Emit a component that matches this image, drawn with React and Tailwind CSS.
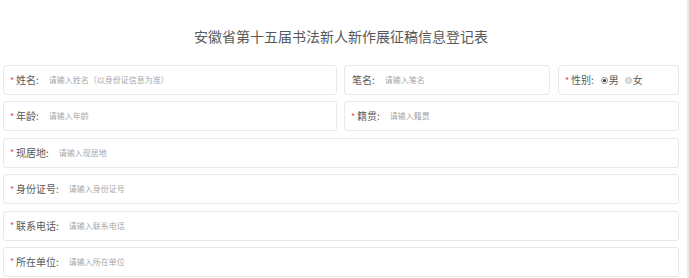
import { useState } from "react";

const FONT = { fontFamily: '"Noto Sans CJK SC", "Noto Sans", sans-serif' };

function Field({ label, placeholder, required = true, className = "" }) {
   return (
      <div
         className={`flex h-[30px] items-center rounded-[3px] border border-[#e8e8e8] bg-white pl-[6px] pr-2 ${className}`}>
         {required ? (
            <span className="w-[6px] shrink-0 text-[9px] leading-none text-[#f04848]">*</span>
         ) : (
            <span className="w-[1px] shrink-0" />
         )}
         <span className="shrink-0 text-[10px] leading-none text-[#595959]">{label}:</span>
         <input
            placeholder={placeholder}
            className="ml-[10px] min-w-0 flex-1 bg-transparent text-[8px] text-[#555] outline-none placeholder:text-[#a8a8a8]"
            style={FONT}
         />
      </div>
   );
}

function Radio({ checked, label, onClick }) {
   return (
      <button type="button" onClick={onClick} className="flex items-center">
         {checked ? (
            <span className="flex h-[7px] w-[7px] items-center justify-center rounded-full border border-[#8a8a8a] bg-white">
               <span className="h-[3px] w-[3px] rounded-full bg-[#333]" />
            </span>
         ) : (
            <span className="h-[7px] w-[7px] rounded-full border border-[#c4c4c4] bg-[#e2e2e2]" />
         )}
         <span className="ml-[1px] text-[10px] leading-none text-[#595959]">{label}</span>
      </button>
   );
}

function GenderField() {
   const [gender, setGender] = useState("男");

   return (
      <div className="flex h-[30px] flex-1 items-center rounded-[3px] border border-[#e8e8e8] bg-white pl-[6px]">
         <span className="w-[6px] shrink-0 text-[9px] leading-none text-[#f04848]">*</span>
         <span className="text-[10px] leading-none text-[#595959]">性别:</span>
         <div className="ml-[7px] flex items-center gap-[6px]">
            <Radio checked={gender === "男"} label="男" onClick={() => setGender("男")} />
            <Radio checked={gender === "女"} label="女" onClick={() => setGender("女")} />
         </div>
      </div>
   );
}

export default function App() {
   return (
      <div className="min-h-screen border-r-2 border-[#ececec] bg-white pl-[3px] pr-[8px]" style={FONT}>
         {/* Title */}
         <h1 className="pt-[26px] pb-[19px] text-center text-[14px] font-normal leading-[20px] text-[#595959]">
            安徽省第十五届书法新人新作展征稿信息登记表
         </h1>

         {/* Form */}
         <div className="flex flex-col gap-[6.4px]">
            <div className="flex">
               <Field className="w-[334px]" label="姓名" placeholder="请输入姓名（以身份证信息为准）" />
               <Field className="ml-[7px] w-[206px]" label="笔名" placeholder="请输入笔名" required={false} />
               <div className="ml-[8px] flex flex-1">
                  <GenderField />
               </div>
            </div>
            <div className="flex">
               <Field className="w-[334px]" label="年龄" placeholder="请输入年龄" />
               <Field className="ml-[7px] flex-1" label="籍贯" placeholder="请输入籍贯" />
            </div>
            <Field label="现居地" placeholder="请输入现居地" />
            <Field label="身份证号" placeholder="请输入身份证号" />
            <Field label="联系电话" placeholder="请输入联系电话" />
            <Field label="所在单位" placeholder="请输入所在单位" />
         </div>
      </div>
   );
}
